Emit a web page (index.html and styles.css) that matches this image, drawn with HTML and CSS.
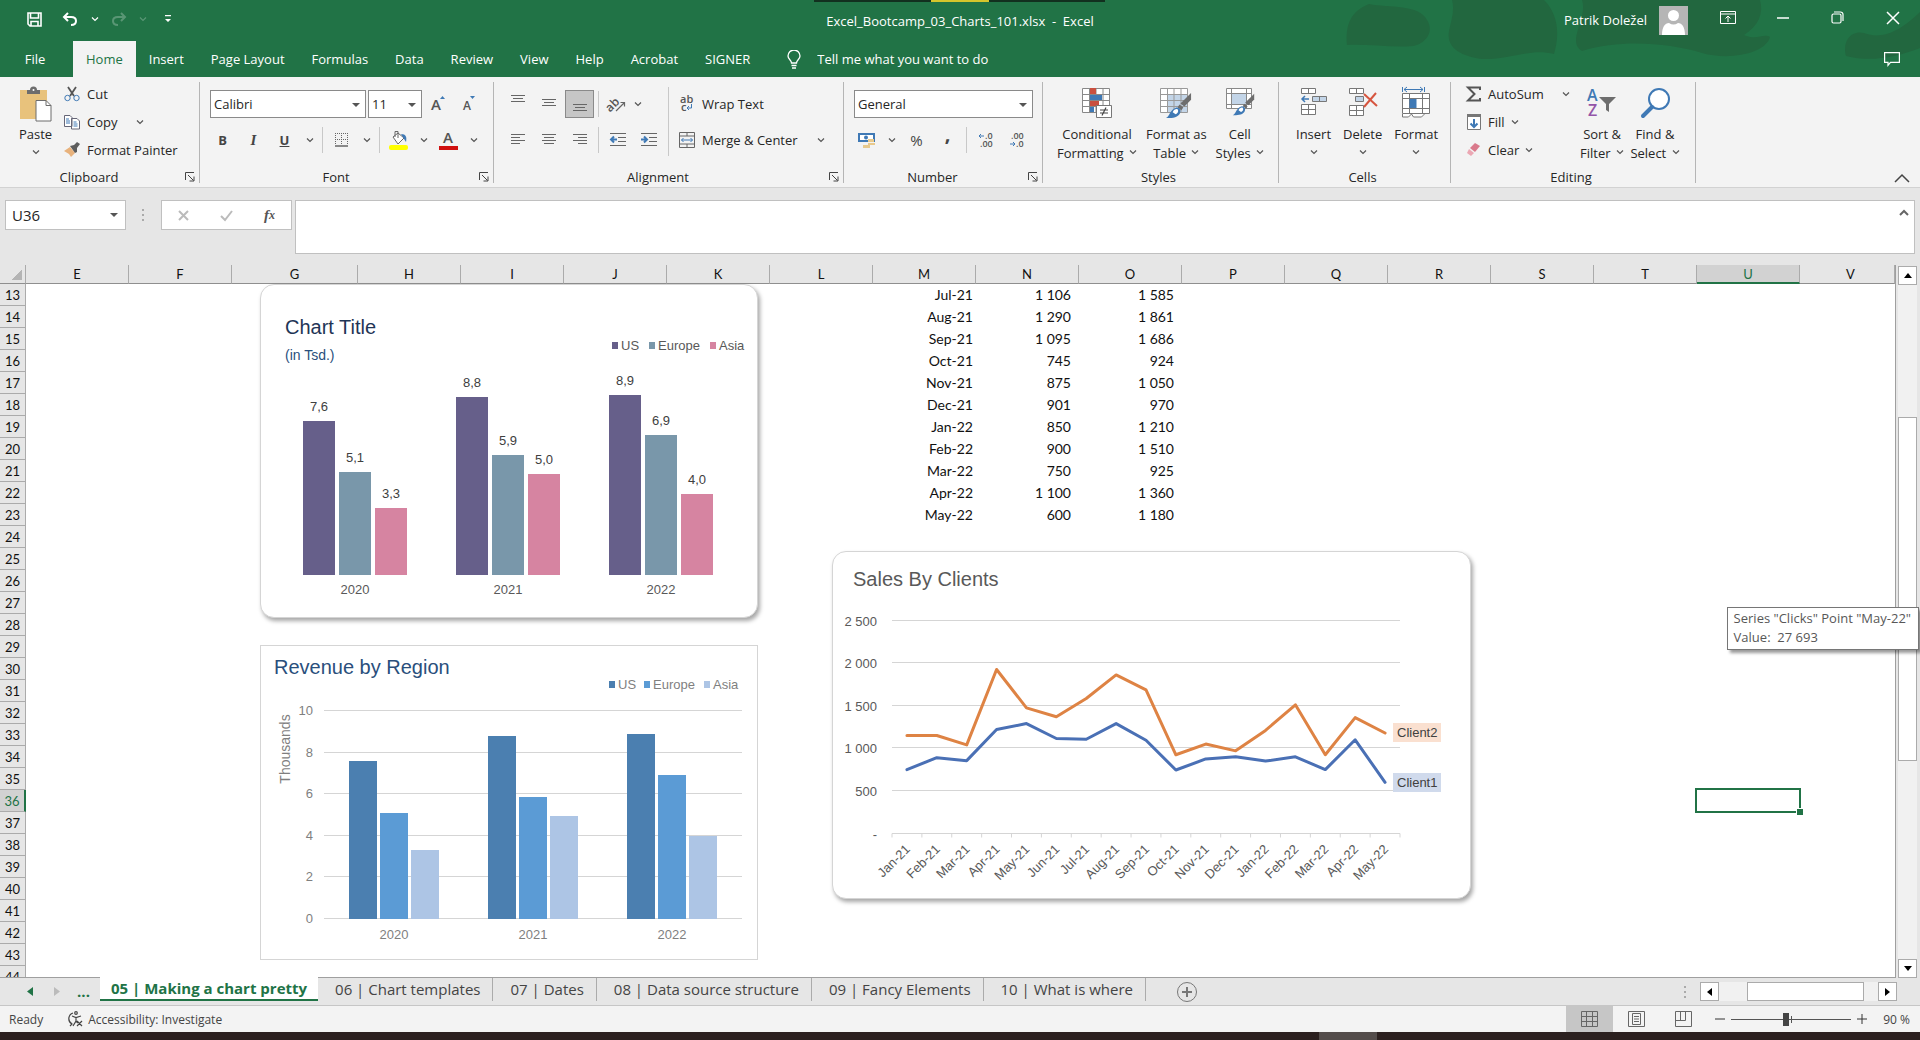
FILE: index.html
```html
<!DOCTYPE html>
<html lang="en">
<head>
    <meta charset="UTF-8">
    <meta name="viewport" content="width=device-width, initial-scale=1.0">
    <title>Excel_Bootcamp_03_Charts_101.xlsx - Excel</title>
    <link rel="stylesheet" href="styles.css">
</head>
<body>
    <!-- shared icons -->
    <svg class="defs" width="0" height="0">
        <symbol id="chev" viewBox="0 0 8 6"><path d="M1 1.5l3 3 3-3" fill="none" stroke="currentColor" stroke-width="1.2"/></symbol>
        <symbol id="launch" viewBox="0 0 10 10"><path d="M.5 8V.5H9M3 3l5.500 5.500M9 4.500V9H4.500" fill="none" stroke="#444" stroke-width="1"/></symbol>
        <symbol id="brush" viewBox="0 0 28 28"><path d="M27 1v7l-7 7-4-3z" fill="#6d6d6d"/><path d="M15 13l4 3-2 3-4-3z" fill="#6d6d6d"/><path d="M12 16c4 0 5 4 3 7-3 4-9 4-14 4 4-2 4-9 11-11z" fill="#3f79b5"/><path d="M8 21c1-3 4-4 5-3s1 4-2 5" fill="#fff"/></symbol>
    </svg>

    <header class="top">
        <div class="titlebar">
            <svg class="blobs" width="580" height="77" viewBox="0 0 580 77" fill="#22673f">
                <path d="M7 45c-2-20 4-34 22-41 20 4 50 0 58 16 8 12-2 24-14 26-20 2-44-2-66-1z"/>
                <path d="M112 0h92c14 14 16 34 10 54-24-6-44 6-72 5-22-3-36-12-33-28 2-10 6-20 3-31z"/>
                <path d="M242 0h178c4 14-2 26-16 35 12 6 20-2 26 2-4 16-40 24-68 16-34-10-80-14-120-2-16-10 6-32 0-51z"/>
                <path d="M506 56c-4-16 6-26 18-23 14 5 30 4 56-21v36c-26 10-50 14-74 8z"/>
            </svg>
            <div class="quick">
                <button aria-label="Save"><svg width="15" height="15" viewBox="0 0 15 15" fill="none" stroke="#fff" stroke-width="1.600"><path d="M1 1h13v13H3l-2-2zM3.500 1v5h8V1M4 14V9.500h7V14"/></svg></button>
                <button aria-label="Undo"><svg width="16" height="14" viewBox="0 0 16 14" fill="none" stroke="#fff" stroke-width="2"><path d="M6 1L2 5l4 4M2 5h7c3 0 5 1.500 5 4s-2 4-5 4"/></svg></button>
                <button aria-label="Undo list"><svg width="8" height="6"><use href="#chev"/></svg></button>
                <button class="off" aria-label="Redo"><svg width="16" height="14" viewBox="0 0 16 14" fill="none" stroke="#fff" stroke-width="2"><path d="M10 1l4 4-4 4M14 5H7C4 5 2 6.500 2 9s2 4 5 4"/></svg></button>
                <button class="off" aria-label="Redo list"><svg width="8" height="6"><use href="#chev"/></svg></button>
                <button aria-label="Customize"><svg width="8" height="8" viewBox="0 0 8 8"><path d="M1 0h6v1.300H1zM1 4h6L4 7z" fill="#fff"/></svg></button>
            </div>
            <h1 class="doc">Excel_Bootcamp_03_Charts_101.xlsx&nbsp; -&nbsp; Excel</h1>
            <div class="account">
                <span>Patrik Doležel</span>
                <svg class="avatar" width="29" height="29" viewBox="0 0 29 29"><path d="M0 0h29v29H0z" fill="#b5b5b5"/><circle cx="14.500" cy="9.500" r="5.500" fill="#fff"/><path d="M3 29c0-8 3-12 7-12 3 2 6 2 9 0 4 0 7 4 7 12z" fill="#fff"/></svg>
                <button aria-label="Ribbon display options"><svg width="16" height="13" viewBox="0 0 16 13" fill="none" stroke="#fff"><path d="M.5.5h15v12H.5zM.5 3h15M8 11V5M5.500 7.500L8 5l2.500 2.500"/></svg></button>
                <button aria-label="Minimize"><svg width="12" height="12"><path d="M0 6h12" stroke="#fff" stroke-width="1.500"/></svg></button>
                <button aria-label="Restore"><svg width="13" height="13" viewBox="0 0 13 13" fill="none" stroke="#fff" stroke-width="1.200"><rect x="1" y="3" width="9" height="9" rx="1.500"/><path d="M3 1h6.500a2.500 2.500 0 0 1 2.500 2.500V10"/></svg></button>
                <button aria-label="Close"><svg width="12" height="12"><path d="M0 0l12 12M12 0L0 12" stroke="#fff" stroke-width="1.500"/></svg></button>
            </div>
            <span class="recorder"><i></i></span>
        </div>

        <nav class="tabs">
            <button class="file">File</button>
            <button class="active">Home</button>
            <button>Insert</button>
            <button>Page Layout</button>
            <button>Formulas</button>
            <button>Data</button>
            <button>Review</button>
            <button>View</button>
            <button>Help</button>
            <button>Acrobat</button>
            <button>SIGNER</button>
            <label class="tell">
                <svg width="14" height="19" viewBox="0 0 14 19" fill="none" stroke="#fff" stroke-width="1.300"><path d="M4.500 13c0-3-3.500-3.500-3.500-7a6 6 0 0 1 12 0c0 3.500-3.500 4-3.500 7zM4.500 15.500h5M5 18h4"/></svg>
                <input type="text" placeholder="Tell me what you want to do">
            </label>
            <button class="comment" aria-label="Comments"><svg width="16" height="14" viewBox="0 0 16 14" fill="none" stroke="#fff" stroke-width="1.200"><path d="M.6.6h14.800v9.800H6.500l-2.500 3v-3H.6z"/></svg></button>
        </nav>
    </header>

    <div class="ribbon">
        <section class="group g-clipboard">
            <div class="tools">
                <button class="big">
                    <svg width="32" height="35" viewBox="0 -2 32 35"><path d="M0 3h27v29H0z" fill="#e8c27c"/><path d="M7 7V3h3a3.500 3.500 0 0 1 7 0h3v4z" fill="#6d6d6d"/><circle cx="13.500" cy="3" r="1" fill="#fff"/><path d="M16 13.500h10l5 5V34H16z" fill="#fff" stroke="#6d6d6d"/><path d="M26 13.500v5h5" fill="none" stroke="#6d6d6d"/></svg>
                    <span>Paste</span><svg class="chev"><use href="#chev"/></svg>
                </button>
                <div class="stack">
                    <button><svg width="16" height="16" viewBox="0 0 16 16" fill="none"><path d="M4 1l6 9M12 1L6 10" stroke="#555" stroke-width="1.800"/><circle cx="3.500" cy="12" r="2.700" stroke="#3f79b5"/><circle cx="12.500" cy="12" r="2.700" stroke="#3f79b5"/></svg>Cut</button>
                    <button class="copy"><svg width="16" height="16" viewBox="0 0 16 16" fill="#fff" stroke="#667"><path d="M.5 1.500H6l2 2v9H.5zM7.500 4.500H13l2.500 2.500v8h-8z"/><path d="M2 5h3M2 7h4M2 9h4M9.500 8h3M9.500 10h4M9.500 12h4" stroke="#3f79b5"/></svg>Copy<svg class="chev"><use href="#chev"/></svg></button>
                    <button><svg width="16" height="16" viewBox="0 0 16 16"><path d="M0 9l6-4 5 6-4 4-2-3z" fill="#e8b27c"/><path d="M6 4l4-1 3-3 3 2-3 4v4l-2 1z" fill="#5d5d5d"/></svg>Format Painter</button>
                </div>
            </div>
            <footer><h2>Clipboard</h2><button class="launch" aria-label="Clipboard settings"><svg width="10" height="10"><use href="#launch"/></svg></button></footer>
        </section>

        <section class="group g-font">
            <div class="tools rows">
                <div class="row">
                    <span class="select font-name"><select aria-label="Font"><option>Calibri</option></select></span>
                    <span class="select font-size"><select aria-label="Font size"><option>11</option></select></span>
                    <button class="ic" aria-label="Grow font"><svg width="16" height="18" viewBox="0 0 16 18"><text x="1" y="15" class="glyph" font-size="15">A</text><path d="M10 4l2.500-3L15 4z" fill="#3f79b5"/></svg></button>
                    <button class="ic" aria-label="Shrink font"><svg width="16" height="18" viewBox="0 0 16 18"><text x="2" y="15" class="glyph" font-size="12">A</text><path d="M9 1h5l-2.500 3z" fill="#3f79b5"/></svg></button>
                </div>
                <div class="row">
                    <button class="ic b">B</button>
                    <button class="ic i">I</button>
                    <button class="ic u">U</button>
                    <button class="dd" aria-label="Underline styles"><svg class="chev"><use href="#chev"/></svg></button>
                    <span class="sep"></span>
                    <button class="ic" aria-label="Borders"><svg width="14" height="14" viewBox="0 0 14 14" stroke="#666"><path d="M.5 0v12M6.500 0v12M12.500 0v12M0 .5h13M0 6.500h13" stroke-dasharray="1 1"/><path d="M0 13h13" stroke-width="1.500"/></svg></button>
                    <button class="dd" aria-label="Border styles"><svg class="chev"><use href="#chev"/></svg></button>
                    <span class="sep"></span>
                    <button class="ic" aria-label="Fill color"><svg width="19" height="20" viewBox="0 0 19 20"><path d="M4 7l5-4 6 5-6 6z" fill="#fff" stroke="#666"/><path d="M6 7V1.500h3V8" fill="none" stroke="#666"/><path d="M12 4c5 0 6 3 5 8l-2-3z" fill="#3f79b5"/><rect y="15" width="19" height="5" rx="2" fill="#ffff00"/></svg></button>
                    <button class="dd" aria-label="Fill colors"><svg class="chev"><use href="#chev"/></svg></button>
                    <button class="ic" aria-label="Font color"><svg width="19" height="20" viewBox="0 0 19 20"><text x="4" y="13" class="glyph" font-size="15">A</text><path d="M0 16h19v4H0z" fill="#d01010"/></svg></button>
                    <button class="dd" aria-label="Font colors"><svg class="chev"><use href="#chev"/></svg></button>
                </div>
            </div>
            <footer><h2>Font</h2><button class="launch" aria-label="Font settings"><svg width="10" height="10"><use href="#launch"/></svg></button></footer>
        </section>

        <section class="group g-align">
            <div class="tools">
                <div class="rows">
                    <div class="row">
                        <button class="ic" aria-label="Top align"><svg width="14" height="22" stroke="#666"><path d="M0 2.500h14M2 5.500h10M0 8.500h14"/></svg></button>
                        <button class="ic" aria-label="Middle align"><svg width="14" height="22" stroke="#666"><path d="M0 6.500h14M2 9.500h10M0 12.500h14"/></svg></button>
                        <button class="ic on" aria-label="Bottom align"><svg width="14" height="22" stroke="#666"><path d="M0 11.500h14M2 14.500h10M0 17.500h14"/></svg></button>
                        <span class="sep"></span>
                        <button class="ic orient" aria-label="Orientation"><svg width="17" height="17" viewBox="0 0 17 17"><text x="-3" y="11" class="glyph" font-size="12" transform="rotate(-45 6 9)">ab</text><path d="M7 15l8.500-8.500M11.500 6.500h4v4" fill="none" stroke="#666" stroke-width="1.200"/></svg></button>
                        <button class="dd" aria-label="Orientations"><svg class="chev"><use href="#chev"/></svg></button>
                    </div>
                    <div class="row">
                        <button class="ic" aria-label="Align left"><svg width="14" height="14" stroke="#666"><path d="M0 1.500h14M0 4.500h9M0 7.500h14M0 10.500h9"/></svg></button>
                        <button class="ic" aria-label="Center"><svg width="14" height="14" stroke="#666"><path d="M0 1.500h14M2 4.500h10M0 7.500h14M2 10.500h10"/></svg></button>
                        <button class="ic" aria-label="Align right"><svg width="14" height="14" stroke="#666"><path d="M0 1.500h14M5 4.500h9M0 7.500h14M5 10.500h9"/></svg></button>
                        <span class="sep"></span>
                        <button class="ic" aria-label="Decrease indent"><svg width="16" height="14" stroke="#666"><path d="M0 .5h16M8 4.500h8M8 8.500h8M0 12.500h16"/><path d="M7 6.500H1M4 3.500l-3 3 3 3" fill="none" stroke="#3f79b5" stroke-width="2"/></svg></button>
                        <button class="ic" aria-label="Increase indent"><svg width="16" height="14" stroke="#666"><path d="M0 .5h16M8 4.500h8M8 8.500h8M0 12.500h16"/><path d="M0 6.500h6M3 3.500l3 3-3 3" fill="none" stroke="#3f79b5" stroke-width="2"/></svg></button>
                    </div>
                </div>
                <div class="rows wide">
                    <button class="row"><svg width="16" height="16" viewBox="0 0 16 16"><text x="1" y="7" class="glyph" font-size="11">ab</text><text x="2" y="15" class="glyph" font-size="11">c</text><path d="M12.500 8v4H8.500M10 10l-2 2 2 2" fill="none" stroke="#3f79b5"/></svg>Wrap Text</button>
                    <button class="row"><svg width="16" height="16" viewBox="0 0 16 16" fill="none" stroke="#666"><path d="M.5.5h15v15H.5zM.5 4h15M.5 12h15M8 .5V4M8 12v3.500"/><path d="M2.500 8h11M4.500 6l-2 2 2 2M11.500 6l2 2-2 2" stroke="#3f79b5"/></svg>Merge &amp; Center<svg class="chev"><use href="#chev"/></svg></button>
                </div>
            </div>
            <footer><h2>Alignment</h2><button class="launch" aria-label="Alignment settings"><svg width="10" height="10"><use href="#launch"/></svg></button></footer>
        </section>

        <section class="group g-number">
            <div class="tools rows">
                <div class="row">
                    <span class="select num-format"><select aria-label="Number format"><option>General</option></select></span>
                </div>
                <div class="row">
                    <button class="ic" aria-label="Accounting format"><svg width="17" height="17" viewBox="0 0 17 17"><path d="M1 2h15v7H1z" fill="#fff" stroke="#3f79b5" stroke-width="2"/><circle cx="8" cy="5.500" r="2" fill="#3f79b5"/><path d="M10 7h6v3h-6zM10 11h7v2h-7zM5 13h7v3H5z" fill="#e8c98c"/></svg></button>
                    <button class="dd" aria-label="Accounting formats"><svg class="chev"><use href="#chev"/></svg></button>
                    <button class="ic pct">%</button>
                    <button class="ic comma">,</button>
                    <span class="sep"></span>
                    <button class="ic" aria-label="Increase decimal"><svg width="16" height="17" viewBox="0 0 16 17"><text x="7" y="7" class="glyph" font-size="9">.0</text><text x="2" y="15" class="glyph" font-size="9">.00</text><path d="M6 4H1M3 2L1 4l2 2" fill="none" stroke="#3f79b5"/></svg></button>
                    <button class="ic" aria-label="Decrease decimal"><svg width="16" height="17" viewBox="0 0 16 17"><text x="2" y="7" class="glyph" font-size="9">.00</text><text x="7" y="15" class="glyph" font-size="9">.0</text><path d="M1 12h5M4 10l2 2-2 2" fill="none" stroke="#3f79b5"/></svg></button>
                </div>
            </div>
            <footer><h2>Number</h2><button class="launch" aria-label="Number settings"><svg width="10" height="10"><use href="#launch"/></svg></button></footer>
        </section>

        <section class="group g-styles">
            <div class="tools">
                <button class="big">
                    <svg width="32" height="33" viewBox="0 0 32 33"><path d="M1.500 2.500h27v24h-27zM1.500 8.500h27M1.500 14.500h27M1.500 20.500h27M8.500 2v24M15 2v24M22 2v24" fill="#fff" stroke="#888"/><path d="M9 2h6v6H9zM9 15h9v5H9z" fill="#c9503f"/><path d="M9 9h12v5H9zM9 21h4v5H9z" fill="#3f79b5"/><path d="M15.500 19.500h15v12h-15z" fill="#fff" stroke="#777"/><path d="M19 24h8M19 27h8M25 21.500l-4 8" stroke="#444" stroke-width="1.200"/></svg>
                    <span>Conditional</span><span>Formatting <svg class="chev"><use href="#chev"/></svg></span>
                </button>
                <button class="big">
                    <svg width="34" height="33" viewBox="0 0 34 33"><path d="M1.500 2.500h27v24h-27z" fill="#fff"/><path d="M8 8h21v18H8z" fill="#c3d5e8"/><path d="M1.500 2.500h27v24h-27zM1.500 8.500h27M1.500 14.500h27M1.500 20.500h27M8.500 2v24M15 2v24M22 2v24" fill="none" stroke="#999"/><use href="#brush" x="6" y="6" width="27" height="27"/></svg>
                    <span>Format as</span><span>Table <svg class="chev"><use href="#chev"/></svg></span>
                </button>
                <button class="big">
                    <svg width="30" height="33" viewBox="0 0 30 33"><path d="M1.500 2.500h25v20h-25zM1.500 7.500h25M1.500 18.500h25M6.500 2v20M21.500 2v20" fill="#fff" stroke="#888"/><path d="M7 8h14v10H7z" fill="#c3d5e8"/><use href="#brush" x="7" y="7" width="23" height="23"/></svg>
                    <span>Cell</span><span>Styles <svg class="chev"><use href="#chev"/></svg></span>
                </button>
            </div>
            <footer><h2>Styles</h2></footer>
        </section>

        <section class="group g-cells">
            <div class="tools">
                <button class="big">
                    <svg width="28" height="33" viewBox="0 0 28 33" fill="#fff" stroke="#777"><path d="M1.500 2.500h14v5h-14zM8.500 2.500v5M1.500 18.500h14v10h-14zM8.500 18.500v10M1.500 23.500h14"/><path d="M12.500 10.500h14v5h-14zM19.500 10.500v5" fill="#c3d5e8"/><path d="M9 13H2M5 10l-3 3 3 3" fill="none" stroke="#3f79b5" stroke-width="1.500"/></svg>
                    <span>Insert</span><svg class="chev"><use href="#chev"/></svg>
                </button>
                <button class="big">
                    <svg width="30" height="33" viewBox="0 0 30 33" fill="#fff" stroke="#777"><path d="M1.500 2.500h14v5h-14zM8.500 2.500v5M1.500 19.500h14v10h-14zM8.500 19.500v10M1.500 24.500h14"/><path d="M7.500 10.500h8v5h-8z" fill="#c3d5e8"/><path d="M16 8l13 12M28 7L16 21" fill="none" stroke="#d6553f" stroke-width="2"/></svg>
                    <span>Delete</span><svg class="chev"><use href="#chev"/></svg>
                </button>
                <button class="big">
                    <svg width="30" height="33" viewBox="0 0 30 33" fill="#fff" stroke="#777"><path d="M1.500 7.500h27v20h-27zM8.500 7.500v20M21.500 7.500v20M1.500 12.500h27M1.500 22.500h27M1.500 28v3h6l3-3 2 3h8l3-3"/><path d="M8.500 13h7v9h-7z" fill="#3f79b5" stroke="none"/><path d="M1.500 1v5M23.500 1v5M3 3.500h19M6 1L3 3.500 6 6M19 1l3 2.500L19 6" fill="none" stroke="#3f79b5"/></svg>
                    <span>Format</span><svg class="chev"><use href="#chev"/></svg>
                </button>
            </div>
            <footer><h2>Cells</h2></footer>
        </section>

        <section class="group g-editing">
            <div class="tools">
                <div class="stack">
                    <button class="sum"><svg width="16" height="16" viewBox="0 0 16 16"><path d="M14 4V1.500H2L8.500 8 2 14.500h12V12" fill="none" stroke="#555" stroke-width="2"/></svg>AutoSum<svg class="chev"><use href="#chev"/></svg></button>
                    <button><svg width="16" height="16" viewBox="0 0 16 16"><path d="M1.500.5h13v15h-13z" fill="#fff" stroke="#777"/><path d="M1 0h14v3H1z" fill="#777"/><path d="M8 5v8M4.500 9.500L8 13l3.500-3.500" fill="none" stroke="#3f79b5" stroke-width="2"/></svg>Fill<svg class="chev"><use href="#chev"/></svg></button>
                    <button><svg width="16" height="16" viewBox="0 0 16 16"><path d="M9 1l5 3-5 6-5-4z" fill="#d9798b"/><path d="M3 7l5 4-3 3-4-3z" fill="#eba7b3"/></svg>Clear<svg class="chev"><use href="#chev"/></svg></button>
                </div>
                <button class="big">
                    <svg width="30" height="33" viewBox="0 0 30 33"><text x="0" y="15" font-size="16" class="az-a">A</text><text x="1" y="30" font-size="16" class="az-z">Z</text><path d="M12 11h17l-7 7v8l-3-2v-6z" fill="#6d6d6d"/></svg>
                    <span>Sort &amp;</span><span>Filter <svg class="chev"><use href="#chev"/></svg></span>
                </button>
                <button class="big">
                    <svg width="32" height="33" viewBox="0 0 32 33"><circle cx="20" cy="13" r="10" fill="#fff" stroke="#3f79b5" stroke-width="2"/><path d="M13 21l-9 9" stroke="#3f79b5" stroke-width="4" stroke-linecap="round"/></svg>
                    <span>Find &amp;</span><span>Select <svg class="chev"><use href="#chev"/></svg></span>
                </button>
            </div>
            <footer><h2>Editing</h2></footer>
        </section>
        <button class="collapse" aria-label="Collapse ribbon"><svg width="16" height="10"><path d="M1 9l7-7 7 7" fill="none" stroke="#444" stroke-width="1.500"/></svg></button>
    </div>

    <div class="formula">
        <span class="select namebox"><input type="text" value="U36" aria-label="Name box"></span>
        <svg class="grip" width="4" height="14" fill="#aaa"><path d="M1 1h2v2H1zM1 6h2v2H1zM1 11h2v2H1z"/></svg>
        <div class="fx">
            <button aria-label="Cancel"><svg width="11" height="11"><path d="M1 1l9 9M10 1l-9 9" stroke="#bbb" stroke-width="2"/></svg></button>
            <button aria-label="Enter"><svg width="13" height="11"><path d="M1 6l4 4 7-9" fill="none" stroke="#bbb" stroke-width="2"/></svg></button>
            <button class="fn">f<small>x</small></button>
        </div>
        <div class="entry">
            <textarea aria-label="Formula bar"></textarea>
            <svg width="10" height="7"><path d="M1 6l4-4 4 4" fill="none" stroke="#666" stroke-width="2"/></svg>
        </div>
    </div>

    <main class="workspace">
        <div class="sheet">
            <table>
                <colgroup id="cols"></colgroup>
                <thead><tr id="letters"></tr></thead>
                <tbody id="cells"></tbody>
            </table>
            <div class="cursor"></div>
            <svg class="chart card" id="chartTitle" width="498" height="334" aria-label="Chart Title"></svg>
            <svg class="chart" id="chartRegion" width="498" height="315" aria-label="Revenue by Region"></svg>
            <svg class="chart card" id="chartClients" width="639" height="348" aria-label="Sales By Clients"></svg>
        </div>
        <div class="vscroll">
            <button aria-label="Scroll up"><svg width="8" height="5"><path d="M0 5l4-5 4 5z"/></svg></button>
            <div class="track"><div class="thumb"></div></div>
            <button aria-label="Scroll down"><svg width="8" height="5"><path d="M0 0h8L4 5z"/></svg></button>
        </div>
        <div class="tooltip">Series "Clicks" Point "May-22"<br>Value:&nbsp; 27 693</div>
    </main>

    <div class="sheets">
        <div class="sheetnav">
            <button aria-label="Previous sheet"><svg width="6" height="9"><path d="M6 0v9L0 4.500z" fill="#217346"/></svg></button>
            <button aria-label="Next sheet"><svg width="6" height="9"><path d="M0 0v9l6-4.500z" fill="#bbb"/></svg></button>
            <button class="more">...</button>
        </div>
        <button class="tab active">05 | Making a chart pretty</button>
        <button class="tab">06 | Chart templates</button>
        <button class="tab">07 | Dates</button>
        <button class="tab">08 | Data source structure</button>
        <button class="tab">09 | Fancy Elements</button>
        <button class="tab">10 | What is where</button>
        <button class="add" aria-label="New sheet"><svg width="20" height="20" fill="none" stroke="#777"><circle cx="10" cy="10" r="9.500"/><path d="M10 5v10M5 10h10" stroke-width="2"/></svg></button>
        <div class="hscroll">
            <svg class="grip" width="4" height="14" fill="#aaa"><path d="M1 1h2v2H1zM1 6h2v2H1zM1 11h2v2H1z"/></svg>
            <button aria-label="Scroll left"><svg width="5" height="8"><path d="M5 0v8L0 4z"/></svg></button>
            <div class="track"><div class="thumb"></div></div>
            <button aria-label="Scroll right"><svg width="5" height="8"><path d="M0 0v8l5-4z"/></svg></button>
        </div>
    </div>

    <footer class="status">
        <span class="ready">Ready</span>
        <button class="access"><svg width="16" height="16" viewBox="0 0 16 16" fill="none" stroke="#444" stroke-width="1.200"><path d="M6 2a6 6 0 0 0-1 11M3 11l2 2-2 2"/><circle cx="9" cy="2" r="1.300"/><path d="M5 5l4 1.500L14 5M9 6.500V10l-3 5M9 10l2 2M10 10l5 5M15 10l-5 5"/></svg>Accessibility: Investigate</button>
        <div class="views">
            <button class="on" aria-label="Normal"><svg width="17" height="16" fill="none" stroke="#666"><path d="M.5.5h16v15H.5zM.5 5.500h16M.5 10.500h16M5.500.5v15M11.500.5v15"/></svg></button>
            <button aria-label="Page layout"><svg width="17" height="16" fill="none" stroke="#666"><path d="M.5.500h16v15H.5zM4.500 2.500h8v11h-8zM6 5.500h5M6 8h5M6 10.500h5"/></svg></button>
            <button aria-label="Page break"><svg width="17" height="16" fill="none" stroke="#666"><path d="M.5.500h16v15H.5zM.5 9.500h10v-9M5.500.500v9"/></svg></button>
        </div>
        <div class="zoom">
            <button aria-label="Zoom out"><svg width="10" height="10"><path d="M0 5h10" stroke="#333"/></svg></button>
            <input type="range" min="0" max="100" value="45" aria-label="Zoom">
            <button aria-label="Zoom in"><svg width="10" height="10"><path d="M0 5h10M5 0v10" stroke="#333"/></svg></button>
            <span>90 %</span>
        </div>
    </footer>
    <div class="taskbar"><i></i></div>

    <script src="script.js"></script>
</body>
</html>
```

FILE: styles.css
```css
* {
    margin: 0;
    padding: 0;
    box-sizing: border-box;
}
body {
    display: flex;
    flex-direction: column;
    height: 100vh;
    overflow: hidden;
    background: #e6e6e6;
    color: #262626;
    font-family: "Open Sans", "Noto Sans", sans-serif;
    font-size: 13px;
    line-height: 19px;
}
button, input, select, textarea {
    font: inherit;
    color: inherit;
    border: none;
    background: none;
    outline: none;
}
button {
    display: flex;
    align-items: center;
    justify-content: center;
    white-space: nowrap;
}
svg {
    flex-shrink: 0;
}
button svg {
    overflow: visible;
}
.defs {
    position: absolute;
}
.chev {
    width: 8px;
    height: 6px;
    color: #555;
}

/* title bar */
.top {
    background: #217346;
    color: #fff;
}
.titlebar {
    position: relative;
    display: grid;
    grid-template-columns: 1fr auto 1fr;
    align-items: center;
    height: 41px;
}
.blobs {
    position: absolute;
    top: 0;
    right: 0;
}
.quick {
    display: flex;
    padding: 0 0 3px 17px;
}
.quick button {
    width: 34px;
    height: 30px;
}
.quick button:nth-child(2) {
    width: 38px;
}
.quick button:nth-child(3),
.quick button:nth-child(5) {
    width: 12px;
}
.quick button:nth-child(4) {
    width: 36px;
}
.quick button:nth-child(6) {
    width: 38px;
}
.quick svg {
    color: #fff;
}
.quick .off {
    opacity: 0.25;
}
.doc {
    padding-top: 2px;
    font-size: 13px;
    font-weight: normal;
}
.account {
    position: relative;
    display: flex;
    align-items: center;
    justify-content: flex-end;
}
.avatar {
    margin: 0 12px 0 12px;
}
.account button {
    width: 55px;
    height: 34px;
    padding-bottom: 6px;
}
.recorder {
    position: absolute;
    top: 0;
    left: 814px;
    display: flex;
    justify-content: center;
    width: 291px;
    height: 2px;
    background: #12301f;
}
.recorder i {
    width: 58px;
    background: #d5c52c;
}

/* ribbon tabs */
.tabs {
    position: relative;
    display: flex;
    height: 36px;
}
.tabs button {
    padding: 0 14px 0 13px;
}
.tabs .file {
    width: 73px;
    padding: 0 3px 0 0;
}
.tabs .active {
    padding: 0 13px;
    background: #f3f3f3;
    color: #217346;
}
.tell {
    display: flex;
    align-items: center;
    gap: 16px;
    padding-left: 23px;
}
.tell input {
    width: 240px;
}
.tell input::placeholder {
    color: #fff;
    opacity: 1;
}
.tabs .comment {
    margin-left: auto;
    padding: 0 20px;
}

/* ribbon */
.ribbon {
    display: flex;
    height: 111px;
    padding-top: 5px;
    background: #f3f3f3;
    border-bottom: 1px solid #d2d2d2;
}
.group {
    display: flex;
    flex-direction: column;
    height: 101px;
    border-right: 1px solid #b5b5b5;
}
.g-clipboard { width: 200px; }
.g-font { width: 294px; }
.g-align { width: 350px; }
.g-number { width: 199px; }
.g-styles { width: 236px; }
.g-cells { width: 172px; }
.g-editing { width: 245px; }
.tools {
    display: flex;
    height: 84px;
}
.group footer {
    display: flex;
    align-items: center;
    height: 12px;
    margin-top: auto;
    padding-right: 4px;
}
.group h2 {
    flex: 1;
    padding-right: 7px;
    font-size: 13px;
    font-weight: normal;
    text-align: center;
}
.group h2:last-child {
    padding-right: 0;
}
.launch {
    width: 10px;
}
.big {
    flex-direction: column;
    justify-content: flex-start;
    padding-top: 3px;
}
.big > svg:first-child {
    height: 35px;
    margin-bottom: 5px;
}
.big .chev {
    vertical-align: 3px;
    margin-left: 2px;
}
.big > .chev {
    margin: 5px 0 0;
}
.g-clipboard .big {
    width: 57px;
    padding-left: 14px;
}
.stack {
    display: flex;
    flex-direction: column;
}
.stack button {
    justify-content: flex-start;
    gap: 7px;
    height: 28px;
    padding-right: 8px;
}
.g-clipboard .stack {
    margin: -2px 0 0 7px;
}
.copy .chev {
    margin-left: 12px;
}
.rows {
    display: flex;
    flex-direction: column;
    gap: 8px;
    padding: 8px 0 0 8px;
}
.row {
    display: flex;
    align-items: center;
    height: 28px;
}
.ic {
    width: 31px;
    height: 28px;
    color: #444;
}
.ic.on {
    width: 29px;
    margin: 0 1px;
    background: #c6c6c6;
    border: 1px solid #8a8a8a;
}
.ic.orient {
    margin-right: -5px;
}
.dd {
    width: 19px;
    height: 28px;
}
.sep {
    width: 1px;
    height: 26px;
    margin: 0 3px;
    background: #c8c8c8;
}
.b { font-weight: bold; }
.i { font-style: italic; font-family: "Liberation Serif", serif; font-weight: bold; font-size: 15px; }
.u { font-weight: bold; text-decoration: underline; }
.pct { font-size: 15px; }
.comma { font-weight: bold; font-size: 20px; padding-bottom: 14px; }
.glyph {
    fill: #555;
    font-weight: 600;
}
.az-a { fill: #3f79b5; font-weight: 600; }
.az-z { fill: #9355a8; font-weight: 600; }
.select {
    position: relative;
    display: inline-flex;
    height: 28px;
    background: #fff;
    border: 1px solid #8a8a8a;
}
.select::after {
    content: "";
    position: absolute;
    right: 5px;
    top: 12px;
    border: 4px solid transparent;
    border-top-color: #555;
    border-bottom: none;
    pointer-events: none;
}
.select select, .select input {
    width: 100%;
    padding-left: 3px;
    appearance: none;
}
.g-font .rows {
    padding-left: 10px;
}
.font-name { width: 156px; margin-right: 2px; }
.font-size { width: 54px; }
.g-font .rows .row:nth-child(2) {
    margin-left: -3px;
}
.num-format { width: 179px; }
.wide {
    height: 69px;
    margin: 5px 0 0 4px;
    padding: 3px 0 0 10px;
    border-left: 1px solid #c8c8c8;
}
.wide .row {
    justify-content: flex-start;
    gap: 7px;
}
.wide .chev {
    margin-left: 12px;
}
.g-number .rows {
    padding-left: 10px;
}
.g-number .row:nth-child(2) {
    margin-left: -3px;
}
.g-styles .tools {
    padding-left: 14px;
    gap: 9px;
}
.g-cells .tools {
    padding-left: 17px;
    gap: 12px;
}
.g-editing .tools {
    padding-left: 15px;
}
.g-editing .stack {
    width: 112px;
    margin-top: -2px;
}
.g-editing .stack button {
    gap: 6px;
}
.sum .chev {
    margin-left: 12px;
}
.g-editing .big {
    width: 48px;
    margin-right: 5px;
}
.collapse {
    align-self: flex-start;
    margin: 91px 10px 0 auto;
}

/* formula bar */
.formula {
    display: flex;
    height: 77px;
    padding: 12px 5px 11px;
}
.formula .select {
    border-color: #c0c0c0;
}
.namebox {
    width: 121px;
    height: 30px;
    font-size: 15px;
}
.namebox.select::after {
    right: 7px;
}
.namebox.select input {
    padding-left: 6px;
}
.formula .grip {
    margin: 8px 16px 0 15px;
}
.fx {
    display: flex;
    width: 131px;
    height: 30px;
    margin-right: 3px;
    background: #fff;
    border: 1px solid #c0c0c0;
}
.fx button {
    flex: 1;
}
.fx .fn {
    font: italic bold 15px "Liberation Serif", serif;
    color: #555;
}
.fn small {
    font-size: 12px;
}
.entry {
    flex: 1;
    display: flex;
    background: #fff;
    border: 1px solid #c0c0c0;
}
.entry textarea {
    flex: 1;
    resize: none;
}
.entry svg {
    margin: 8px 5px;
}

/* grid */
.workspace {
    position: relative;
    display: flex;
    flex: 1;
    min-height: 0;
}
.sheet {
    position: relative;
    flex: 1;
    overflow: hidden;
    background: #fff;
    border-right: 1px solid #9f9f9f;
    border-bottom: 1px solid #9f9f9f;
}
.sheet table {
    width: 100%;
    table-layout: fixed;
    border-collapse: separate;
    border-spacing: 0;
    font-family: Lato, sans-serif;
    font-size: 14px;
    line-height: 18px;
    color: #111;
}
.sheet th {
    font-size: 13px;
    font-weight: normal;
    background: #e6e6e6;
    border-right: 1px solid #ababab;
    border-bottom: 1px solid #ababab;
}
.sheet thead th {
    height: 19px;
    line-height: 16px;
    border-bottom-color: #8f8f8f;
}
.sheet thead th:first-child {
    background: linear-gradient(135deg, transparent 50%, #b4b4b4 50%) 12px 5px / 10px 10px no-repeat #e6e6e6;
}
.sheet thead th:last-child {
    padding-left: 7px;
}
.sheet tbody th {
    height: 22px;
}
.sheet th.picked {
    background: #d2d2d2;
    color: #217346;
}
.sheet thead th.picked {
    border-bottom: 2px solid #217346;
}
.sheet tbody th.picked {
    border-right: 2px solid #217346;
}
.sheet td {
    text-align: right;
    padding-right: 8px;
}
.sheet td.month {
    padding-right: 3px;
}
.cursor {
    position: absolute;
    left: 1695px;
    top: 523px;
    width: 106px;
    height: 25px;
    border: 2px solid #217346;
}
.cursor::after {
    content: "";
    position: absolute;
    right: -4px;
    bottom: -4px;
    width: 6px;
    height: 6px;
    background: #217346;
    border: 1px solid #fff;
    border-width: 1px 0 0 1px;
}

/* charts placed on the sheet */
.chart {
    position: absolute;
    background: #fff;
    border: 1px solid #d5d5d5;
    font-family: "Liberation Sans", sans-serif;
    font-size: 13px;
}
.card {
    border-radius: 14px;
    box-shadow: 2px 3px 4px rgba(0, 0, 0, 0.35);
}
#chartTitle { left: 260px; top: 19px; }
#chartRegion { left: 260px; top: 380px; }
#chartClients { left: 832px; top: 286px; }
.chart .title {
    font-size: 20px;
}
.chart .unit {
    font-size: 14px;
}

/* scrollbars */
.vscroll {
    display: flex;
    flex-direction: column;
    width: 24px;
    padding: 1px 3px 0 2px;
}
.vscroll button, .hscroll button {
    width: 19px;
    height: 19px;
    background: #fff;
    border: 1px solid #ababab;
}
.vscroll .track {
    flex: 1;
    background: #f1f1f1;
    padding-top: 132px;
}
.vscroll .thumb {
    height: 344px;
    background: #fff;
    border: 1px solid #ababab;
}
.tooltip {
    position: absolute;
    right: 1px;
    top: 342px;
    padding: 1px 7px 2px 6px;
    background: #fff;
    border: 1px solid #767676;
    box-shadow: 3px 3px 3px rgba(0, 0, 0, 0.4);
    color: #575757;
}

/* sheet tabs */
.sheets {
    display: flex;
    height: 28px;
    border-bottom: 1px solid #c6c6c6;
    font-size: 15px;
    color: #444;
}
.sheetnav {
    display: flex;
    width: 100px;
    padding-left: 16px;
}
.sheetnav button {
    width: 27px;
    height: 26px;
}
.sheetnav .more {
    font-weight: bold;
    color: #217346;
}
.tab {
    position: relative;
    height: 23px;
    padding: 0 12px 0 17px;
    border-right: 1px solid #ababab;
}
.tab.active {
    height: 24px;
    margin-top: -1px;
    padding: 0 11px;
    background: #fff;
    border-right: none;
    border-bottom: 2px solid #217346;
    color: #217346;
    font-weight: bold;
}
.add {
    width: 82px;
}
.hscroll {
    display: flex;
    align-items: center;
    width: 214px;
    margin-left: auto;
    margin-right: 23px;
}
.hscroll .grip {
    margin-right: 13px;
}
.hscroll .track {
    flex: 1;
    height: 19px;
    padding: 0 14px 0 28px;
    background: #f1f1f1;
}
.hscroll .thumb {
    height: 19px;
    background: #fff;
    border: 1px solid #ababab;
}

/* status bar */
.status {
    display: flex;
    align-items: center;
    height: 26px;
    padding-left: 9px;
    background: #f3f3f3;
    font-size: 12px;
    color: #444;
}
.access {
    gap: 5px;
    margin-left: 24px;
}
.views {
    display: flex;
    height: 26px;
    margin-left: auto;
}
.views button {
    width: 47px;
}
.views .on {
    background: #c6c6c6;
}
.zoom {
    display: flex;
    align-items: center;
    padding: 0 10px 0 5px;
}
.zoom button {
    width: 16px;
}
.zoom input {
    appearance: none;
    width: 120px;
    height: 14px;
    margin: 0 3px;
    background: linear-gradient(#555, #555) center / 100% 1px no-repeat, linear-gradient(#555, #555) center / 1px 7px no-repeat;
}
.zoom input::-webkit-slider-thumb {
    appearance: none;
    width: 6px;
    height: 13px;
    background: #444;
}
.zoom span {
    margin-left: 13px;
}
.taskbar {
    display: flex;
    height: 8px;
    background: #2b201f;
}
.taskbar i {
    width: 58px;
    margin-left: 1319px;
    background: #534c4a;
}
```

FILE: script.js
```js
// Sheet content
const letters = 'EFGHIJKLMNOPQRSTUV'.split('');
const rows = {
    13: ['Jul-21', '1 106', '1 585'],
    14: ['Aug-21', '1 290', '1 861'],
    15: ['Sep-21', '1 095', '1 686'],
    16: ['Oct-21', '745', '924'],
    17: ['Nov-21', '875', '1 050'],
    18: ['Dec-21', '901', '970'],
    19: ['Jan-22', '850', '1 210'],
    20: ['Feb-22', '900', '1 510'],
    21: ['Mar-22', '750', '925'],
    22: ['Apr-22', '1 100', '1 360'],
    23: ['May-22', '600', '1 180']
};

// Last column takes whatever room is left
document.getElementById('cols').innerHTML = '<col style="width:26px">' + letters.map(l => {
    if (l === 'V') return '<col>';
    return `<col style="width:${l === 'G' ? 126 : 103}px">`;
}).join('');

document.getElementById('letters').innerHTML = '<th></th>' + letters.map(l =>
    `<th${l === 'U' ? ' class="picked"' : ''}>${l}</th>`
).join('');

let body = '';
for (let r = 13; r <= 44; r++) {
    body += `<tr><th${r === 36 ? ' class="picked"' : ''}>${r}</th>`;
    letters.forEach(l => {
        const i = 'MNO'.indexOf(l);
        const value = rows[r] && i >= 0 ? rows[r][i] : '';
        body += `<td${i === 0 ? ' class="month"' : ''}>${value}</td>`;
    });
    body += '</tr>';
}
document.getElementById('cells').innerHTML = body;

// SVG helpers
function text(x, y, str, fill, extra) {
    return `<text x="${x}" y="${y}" fill="${fill}" ${extra || ''}>${str}</text>`;
}
function rect(x, y, w, h, fill) {
    return `<rect x="${x}" y="${y}" width="${w}" height="${h}" fill="${fill}"/>`;
}
function line(x1, y1, x2, y2) {
    return `<path d="M${x1} ${y1}L${x2} ${y2}" stroke="#d5d5d5"/>`;
}
const mid = 'text-anchor="middle"';
const end = 'text-anchor="end"';
const years = ['2020', '2021', '2022'];

// Chart Title
(function() {
    const colors = ['#665f8a', '#7997aa', '#d684a1'];
    const data = [[7.6, 5.1, 3.3], [8.8, 5.9, 5.0], [8.9, 6.9, 4.0]];
    const base = 290;
    let out = text(24, 49, 'Chart Title', '#1f3556', 'class="title"') + text(24, 75, '(in Tsd.)', '#2a4f7c', 'class="unit"');
    [['US', 351], ['Europe', 388], ['Asia', 449]].forEach((l, i) => {
        out += rect(l[1], 57, 6, 7, colors[i]) + text(l[1] + 9, 65, l[0], '#595959');
    });
    data.forEach((set, g) => {
        set.forEach((v, i) => {
            const x = 42 + g * 153 + i * 36;
            const h = Math.round(v * 20.26);
            out += rect(x, base - h, 32, h, colors[i]) + text(x + 16, base - h - 10, v.toFixed(1).replace('.', ','), '#404040', mid);
        });
        out += text(94 + g * 153, 309, years[g], '#595959', mid);
    });
    document.getElementById('chartTitle').innerHTML = out;
})();

// Revenue by Region
(function() {
    const colors = ['#4b7fb0', '#5b9bd5', '#adc5e5'];
    const data = [[7.6, 5.12, 3.3], [8.8, 5.87, 4.95], [8.9, 6.9, 4.0]];
    const base = 273;
    let out = text(13, 28, 'Revenue by Region', '#2a4f7c', 'class="title"');
    out += text(0, 0, 'Thousands', '#7f7f7f', 'class="unit" text-anchor="middle" transform="translate(29 103) rotate(-90)"');
    [['US', 348], ['Europe', 383], ['Asia', 443]].forEach((l, i) => {
        out += rect(l[1], 35, 6, 7, colors[i]) + text(l[1] + 9, 43, l[0], '#7f7f7f');
    });
    for (let v = 0; v <= 10; v += 2) {
        const y = Math.round(base - v * 20.8) - 0.5;
        out += line(63, y, 481, y) + text(52, y + 4, v, '#7f7f7f', end);
    }
    data.forEach((set, g) => {
        set.forEach((v, i) => {
            const h = Math.round(v * 20.8);
            out += rect(88 + g * 139 + i * 31, base - h, 28, h, colors[i]);
        });
        out += text(133 + g * 139, 293, years[g], '#7f7f7f', mid);
    });
    document.getElementById('chartRegion').innerHTML = out;
})();

// Sales By Clients
(function() {
    const months = ['Jan-21', 'Feb-21', 'Mar-21', 'Apr-21', 'May-21', 'Jun-21', 'Jul-21', 'Aug-21', 'Sep-21', 'Oct-21',
        'Nov-21', 'Dec-21', 'Jan-22', 'Feb-22', 'Mar-22', 'Apr-22', 'May-22'];
    const client1 = [750, 890, 855, 1220, 1290, 1115, 1106, 1290, 1095, 745, 875, 901, 850, 900, 750, 1100, 600];
    const client2 = [1150, 1150, 1040, 1925, 1475, 1370, 1585, 1861, 1686, 924, 1050, 970, 1210, 1510, 925, 1360, 1180];
    const left = 59, step = 508 / 17, base = 281.5;
    const px = i => left + step * (i + 0.5);
    const py = v => base - v * 0.0852;

    let out = text(20, 34, 'Sales By Clients', '#595959', 'class="title"');
    ['-', '500', '1 000', '1 500', '2 000', '2 500'].forEach((label, i) => {
        const y = Math.round(py(i * 500)) - 0.5;
        out += line(left, y, left + 508, y) + text(44, y + 5, label, '#595959', end);
    });
    for (let i = 0; i <= 17; i++) {
        out += line(left + step * i, base, left + step * i, base + 4);
    }
    months.forEach((m, i) => {
        out += text(0, 0, m, '#595959', `${end} transform="translate(${px(i) + 4} 298) rotate(-45)"`);
    });
    [[client2, '#de8344'], [client1, '#4a70b5']].forEach(s => {
        const pts = s[0].map((v, i) => `${px(i)},${py(v)}`).join(' ');
        out += `<polyline points="${pts}" fill="none" stroke="${s[1]}" stroke-width="3" stroke-linecap="round" stroke-linejoin="round"/>`;
    });
    out += rect(560, 171, 48, 19, '#fae0d0') + text(564, 185, 'Client2', '#404040');
    out += rect(560, 221, 48, 19, '#d0daec') + text(564, 235, 'Client1', '#404040');
    document.getElementById('chartClients').innerHTML = out;
})();
```
